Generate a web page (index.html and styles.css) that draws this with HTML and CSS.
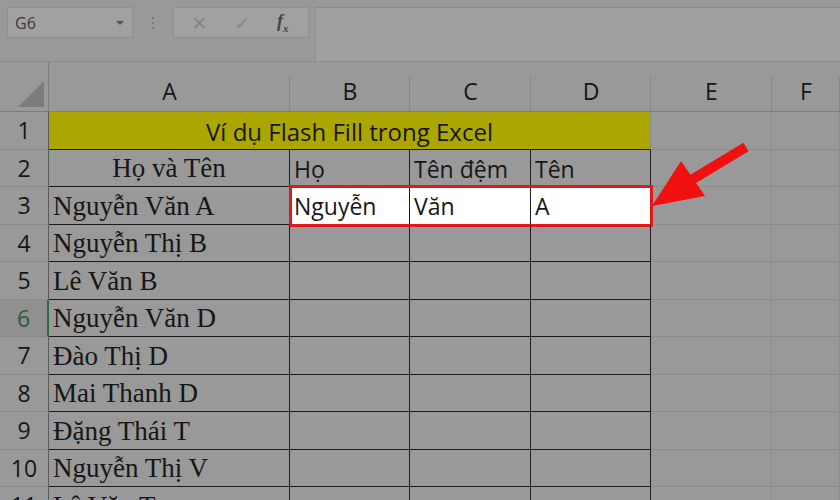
FILE: index.html
```html
<!DOCTYPE html>
<html lang="vi">
<head>
<meta charset="UTF-8" />
<meta name="viewport" content="width=device-width, initial-scale=1" />
<title>Flash Fill</title>
<link rel="stylesheet" href="styles.css">
</head>
<body>

<div class="toolbar">
  <div class="namebox">
    <span>G6</span>
    <span class="caret"></span>
  </div>
  <div class="grip"><i></i><i></i><i></i></div>
  <div class="fx-group">
    <span class="fx-icon">&#x2715;</span>
    <span class="fx-icon">&#x2713;</span>
    <span class="fx-label">f<sub>x</sub></span>
  </div>
  <div class="formula"></div>
</div>

<div class="sheet">
  <!-- column headers -->
  <div class="corner">
    <svg width="26" height="26" viewBox="0 0 26 26"><polygon points="26,0 26,26 0,26" fill="#7c7c7c"/></svg>
  </div>
  <div class="colhead">A</div>
  <div class="colhead">B</div>
  <div class="colhead">C</div>
  <div class="colhead">D</div>
  <div class="colhead">E</div>
  <div class="colhead">F</div>

  <!-- row 1 -->
  <div class="rowhead">1</div>
  <div class="cell title">Ví dụ Flash Fill trong Excel</div>
  <div class="cell"></div>
  <div class="cell"></div>

  <!-- row 2 -->
  <div class="rowhead">2</div>
  <div class="cell t serif center">Họ và Tên</div>
  <div class="cell t sans">Họ</div>
  <div class="cell t sans">Tên đệm</div>
  <div class="cell t sans">Tên</div>
  <div class="cell"></div>
  <div class="cell"></div>

  <!-- row 3: flash fill result -->
  <div class="rowhead">3</div>
  <div class="cell t serif">Nguyễn Văn A</div>
  <div class="cell t sans filled b3">Nguyễn</div>
  <div class="cell t sans filled c3">Văn</div>
  <div class="cell t sans filled d3">A</div>
  <div class="cell"></div>
  <div class="cell"></div>
  <div class="picked"></div>

  <div class="rowhead">4</div>
  <div class="cell t serif">Nguyễn Thị B</div>
  <div class="cell t"></div><div class="cell t"></div><div class="cell t"></div>
  <div class="cell"></div><div class="cell"></div>

  <div class="rowhead">5</div>
  <div class="cell t serif">Lê Văn B</div>
  <div class="cell t"></div><div class="cell t"></div><div class="cell t"></div>
  <div class="cell"></div><div class="cell"></div>

  <div class="rowhead active">6</div>
  <div class="cell t serif">Nguyễn Văn D</div>
  <div class="cell t"></div><div class="cell t"></div><div class="cell t"></div>
  <div class="cell"></div><div class="cell"></div>

  <div class="rowhead">7</div>
  <div class="cell t serif">Đào Thị D</div>
  <div class="cell t"></div><div class="cell t"></div><div class="cell t"></div>
  <div class="cell"></div><div class="cell"></div>

  <div class="rowhead">8</div>
  <div class="cell t serif">Mai Thanh D</div>
  <div class="cell t"></div><div class="cell t"></div><div class="cell t"></div>
  <div class="cell"></div><div class="cell"></div>

  <div class="rowhead">9</div>
  <div class="cell t serif">Đặng Thái T</div>
  <div class="cell t"></div><div class="cell t"></div><div class="cell t"></div>
  <div class="cell"></div><div class="cell"></div>

  <div class="rowhead">10</div>
  <div class="cell t serif">Nguyễn Thị V</div>
  <div class="cell t"></div><div class="cell t"></div><div class="cell t"></div>
  <div class="cell"></div><div class="cell"></div>

  <div class="rowhead">11</div>
  <div class="cell t serif">Lê Văn T</div>
  <div class="cell t"></div><div class="cell t"></div><div class="cell t"></div>
  <div class="cell"></div><div class="cell"></div>
</div>

<svg class="arrow" width="840" height="500" viewBox="0 0 840 500">
  <line x1="746" y1="147" x2="688" y2="182" stroke="#f01010" stroke-width="10" />
  <polygon points="652,206 681,161 705,196" fill="#f01010" />
</svg>

</body>
</html>
```

FILE: styles.css
```css
body {
  margin: 0;
  width: 840px;
  height: 500px;
  overflow: hidden;
  background: #999;
  font-family: 'Lato', 'Liberation Sans', sans-serif;
  color: #161616;
}
.toolbar {
  height: 62px;
  display: flex;
  align-items: flex-start;
  padding: 7px 0 0 7px;
  box-sizing: border-box;
  border-bottom: 1px solid #8a8a8a;
}
.namebox {
  width: 126px;
  height: 31px;
  box-sizing: border-box;
  background: #a1a1a1;
  border: 1px solid #8f8f8f;
  display: flex;
  align-items: center;
  justify-content: space-between;
  padding: 0 8px 0 7px;
  font-family: 'Open Sans', sans-serif;
  font-size: 16px;
  color: #3a3a3a;
}
.caret {
  border-left: 4px solid transparent;
  border-right: 4px solid transparent;
  border-top: 4px solid #555;
}
.grip {
  width: 40px;
  display: flex;
  flex-direction: column;
  align-items: center;
  gap: 3px;
  padding-top: 10px;
}
.grip i {
  width: 2px;
  height: 2px;
  background: #7a7a7a;
}
.fx-group {
  width: 136px;
  height: 31px;
  box-sizing: border-box;
  background: #a1a1a1;
  border: 1px solid #8f8f8f;
  display: flex;
  align-items: center;
  justify-content: space-around;
  padding: 0 6px 0 4px;
}
.fx-icon {
  font-family: 'DejaVu Sans', sans-serif;
  font-size: 19px;
  color: #858585;
}
.fx-label {
  font-family: 'Liberation Serif', serif;
  font-style: italic;
  font-weight: bold;
  font-size: 18px;
  color: #444;
}
.fx-label sub {
  font-size: 11px;
}
.formula {
  flex: 1;
  height: 55px;
  margin-left: 6px;
  box-sizing: border-box;
  background: #a0a0a0;
  border: 1px solid #8c8c8c;
  border-right: none;
}

.sheet {
  display: grid;
  grid-template-columns: 49px 241px 120px 121px 120px 121px 1fr;
  grid-template-rows: 50px repeat(11, 37.5px);
}
.sheet > div {
  box-sizing: border-box;
  min-width: 0;
}
.corner {
  border-right: 1px solid #7c7c7c;
  border-bottom: 1px solid #7c7c7c;
  display: flex;
  align-items: flex-end;
  justify-content: flex-end;
  padding: 0 4px 4px 0;
}
.colhead {
  border-bottom: 1px solid #7f7f7f;
  background: linear-gradient(#878787, #878787) right bottom / 1px 34px no-repeat;
  display: flex;
  align-items: flex-end;
  justify-content: center;
  padding-bottom: 4px;
  font-family: 'Open Sans', sans-serif;
  font-size: 23px;
}
.rowhead {
  border-right: 1px solid #5a5a5a;
  border-bottom: 1px solid #8a8a8a;
  display: flex;
  align-items: center;
  justify-content: center;
  font-family: 'Open Sans', sans-serif;
  font-size: 23px;
}
.rowhead.active {
  background: #909090;
  color: #2b5e3c;
  border-right: 2px solid #2b6a40;
}
.cell {
  border-right: 1px solid #8c8c8c;
  border-bottom: 1px solid #8c8c8c;
  display: flex;
  align-items: center;
  padding: 2px 4px 0;
  white-space: nowrap;
  overflow: hidden;
}
.cell.t {
  border-right-color: #1c1c1c;
  border-bottom-color: #1c1c1c;
}
.title {
  grid-column: span 4;
  background: #aba700;
  justify-content: center;
  border-bottom-color: #1c1c1c;
  font-family: 'Open Sans', sans-serif;
  font-size: 24px;
}
.serif {
  font-family: 'Liberation Serif', serif;
  font-size: 27px;
}
.sans {
  font-family: 'Open Sans', sans-serif;
  font-size: 23px;
}
.center {
  justify-content: center;
}
.filled {
  background: #fff;
}
.b3 { grid-area: 4 / 3; }
.c3 { grid-area: 4 / 4; }
.d3 { grid-area: 4 / 5; }
.picked {
  grid-area: 4 / 3 / 5 / 6;
  margin: -2px -2px -2px -1px;
  border: 3px solid #e2191b;
  pointer-events: none;
}
.arrow {
  position: absolute;
  left: 0;
  top: 0;
  pointer-events: none;
}
```
